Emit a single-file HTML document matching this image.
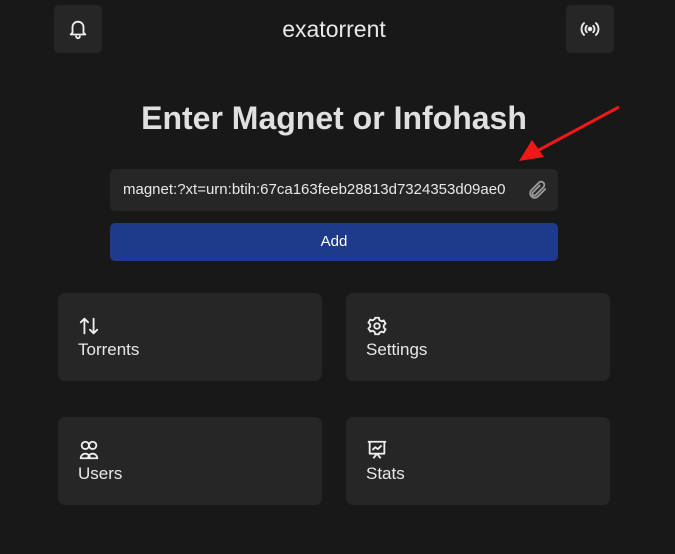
<!DOCTYPE html>
<html><head><style>
body{margin:0;width:675px;height:554px;background:#181818;font-family:"Liberation Sans",sans-serif;color:#e8e8e8;position:relative;overflow:hidden}
.abs{position:absolute}
.btn{background:#262626;border-radius:5px;width:48px;height:48px;display:flex;align-items:center;justify-content:center}
.card{background:#262626;border-radius:7px;width:264px;height:88px}
.card svg{position:absolute;left:20px;top:22px}
.card span{position:absolute;left:20px;top:47px;font-size:17px}
</style></head><body>
<div class="abs btn" style="left:54px;top:5px"><svg width="22" height="22" viewBox="0 0 24 24" fill="none" stroke="#eee" stroke-width="2" stroke-linecap="round" stroke-linejoin="round"><path d="M6 16V10a6 6 0 0 1 12 0v6l2 2H4z"/><path d="M10 20a2 2 0 0 0 4 0"/></svg></div>
<div class="abs" style="left:0;width:668px;top:16px;text-align:center;font-size:23px">exatorrent</div>
<div class="abs btn" style="left:566px;top:5px"><svg width="22" height="22" viewBox="0 0 24 24" fill="none" stroke="#eee" stroke-width="2" stroke-linecap="round"><circle cx="12" cy="12" r="1.5" fill="#eee"/><path d="M8.5 8.5a5 5 0 0 0 0 7M15.5 8.5a5 5 0 0 1 0 7M5.5 5.5a9 9 0 0 0 0 13M18.5 5.5a9 9 0 0 1 0 13"/></svg></div>
<div class="abs" style="left:0;width:668px;top:100px;text-align:center;font-size:32px;font-weight:bold;color:#e0e0e0">Enter Magnet or Infohash</div>
<svg class="abs" style="left:515px;top:104px" width="110" height="62"><path d="M104 3 L22 47" stroke="#f01818" stroke-width="3"/><path d="M4 57 L17 36 L29 53 Z" fill="#f01818"/></svg>
<div class="abs" style="left:110px;top:169px;width:448px;height:42px;background:#262626;border-radius:5px"><span class="abs" style="left:13px;top:12px;font-size:15px;color:#e8e8e8">magnet:?xt=urn:btih:67ca163feeb28813d7324353d09ae0</span><svg class="abs" style="left:416px;top:10px" width="22" height="22" viewBox="0 0 24 24" fill="none" stroke="#999" stroke-width="2" stroke-linecap="round"><path d="M21 11l-8.5 8.5a5 5 0 0 1-7-7L14 4a3.5 3.5 0 0 1 5 5l-8.5 8.5a2 2 0 0 1-3-3L15 7"/></svg></div>
<div class="abs" style="left:110px;top:223px;width:448px;height:38px;background:#1e3a8a;border-radius:5px;text-align:center;line-height:38px;font-size:15px;color:#fff">Add</div>
<div class="abs card" style="left:58px;top:293px"><svg width="22" height="22" viewBox="0 0 24 24" fill="none" stroke="#eee" stroke-width="2" stroke-linecap="round" stroke-linejoin="round"><path d="M7 20V4M3 8l4-4 4 4M17 4v16M13 16l4 4 4-4"/></svg><span>Torrents</span></div>
<div class="abs card" style="left:346px;top:293px"><svg width="22" height="22" viewBox="0 0 24 24" fill="none" stroke="#eee" stroke-width="2"><circle cx="12" cy="12" r="3"/><path d="M10 3h4l.6 2.5 2.2 1.3 2.5-.8 2 3.4-1.9 1.8v2.6l1.9 1.8-2 3.4-2.5-.8-2.2 1.3L14 21h-4l-.6-2.5-2.2-1.3-2.5.8-2-3.4 1.9-1.8v-2.6L2.7 8.4l2-3.4 2.5.8 2.2-1.3z"/></svg><span>Settings</span></div>
<div class="abs card" style="left:58px;top:417px"><svg width="22" height="22" viewBox="0 0 24 24" fill="none" stroke="#eee" stroke-width="2"><circle cx="8" cy="7" r="4"/><circle cx="16" cy="7" r="4"/><path d="M3 21a5 5 0 0 1 10 0zM11 21a5 5 0 0 1 10 0z"/></svg><span>Users</span></div>
<div class="abs card" style="left:346px;top:417px"><svg width="22" height="22" viewBox="0 0 24 24" fill="none" stroke="#eee" stroke-width="2" stroke-linejoin="round"><path d="M2 3h20M4 3v13h16V3M7 12l3-3 3 2 4-4M8 21l4-5 4 5"/></svg><span>Stats</span></div>
</body></html>
